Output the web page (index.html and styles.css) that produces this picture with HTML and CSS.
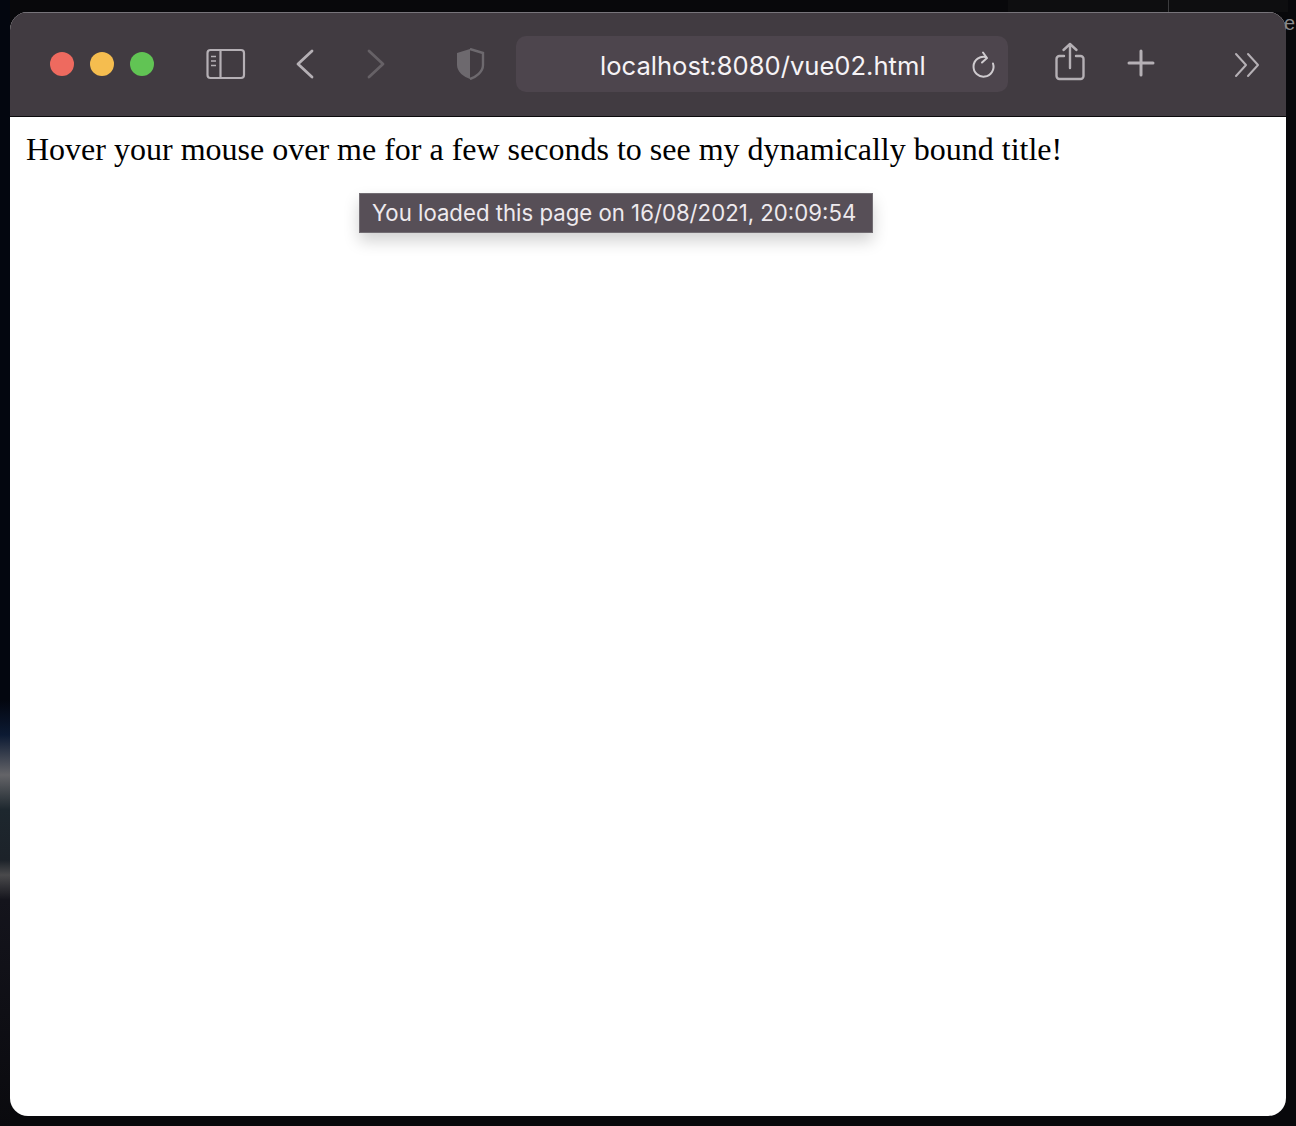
FILE: index.html
```html
<!DOCTYPE html>
<html lang="en">
<head>
<meta charset="utf-8">
<title>vue02</title>
<link rel="stylesheet" href="styles.css">
</head>
<body>
<div class="desktop-lines"><span class="line-a"></span><span class="line-b"></span><span class="edge-letter">e</span></div>
<main class="window">
  <header class="toolbar">
    <div class="lights">
      <span class="light red"></span><span class="light yellow"></span><span class="light green"></span>
    </div>
    <svg class="icon sidebar" width="40" height="32" viewBox="0 0 40 32" fill="none" stroke="#b5b0b5" stroke-width="2.200">
      <rect x="1.500" y="2" width="36.500" height="28" rx="3"/>
      <path d="M14.500 2v28"/>
      <path d="M5 8.500h5M5 13h5M5 17.500h5" stroke-width="1.600"/>
    </svg>
    <svg class="icon back" width="18" height="30" viewBox="0 0 18 30" fill="none" stroke="#b5b0b5" stroke-width="2.800" stroke-linecap="round" stroke-linejoin="round">
      <path d="M16 2 2 15l14 13"/>
    </svg>
    <svg class="icon forward" width="18" height="30" viewBox="0 0 18 30" fill="none" stroke="#666166" stroke-width="2.800" stroke-linecap="round" stroke-linejoin="round">
      <path d="M2 2l14 13L2 28"/>
    </svg>
    <svg class="icon shield" width="30" height="32" viewBox="0 0 30 32">
      <path d="M15 1 2 5v12c0 7 7 12 13 14V1Z" fill="#6d696e"/>
      <path d="M15 1l13 4v12c0 7-7 12-13 14" fill="none" stroke="#6d696e" stroke-width="2.400"/>
    </svg>
    <div class="address">
      <span class="url">localhost:8080/vue02.html</span>
      <svg class="reload" width="24" height="30" viewBox="0 0 24 30" fill="none" stroke="#cfcbcf" stroke-width="2" stroke-linecap="round" stroke-linejoin="round">
        <path d="M14 8A10 10 0 1 0 21 14.500"/>
        <path d="M11 3.500l4 5.500-5 4.500"/>
      </svg>
    </div>
    <svg class="icon share" width="32" height="40" viewBox="0 0 32 40" fill="none" stroke="#b5b0b5" stroke-width="2.400" stroke-linecap="round" stroke-linejoin="round">
      <path d="M10 14H5.500a3 3 0 0 0-3 3v17a3 3 0 0 0 3 3h21a3 3 0 0 0 3-3V17a3 3 0 0 0-3-3H22"/>
      <path d="M16 26V2M9.500 8 16 2l6.500 6"/>
    </svg>
    <svg class="icon plus" width="30" height="30" viewBox="0 0 30 30" stroke="#b5b0b5" stroke-width="3" stroke-linecap="round">
      <path d="M15 3v24M3 15h24"/>
    </svg>
    <svg class="icon more" width="26" height="26" viewBox="0 0 26 26" fill="none" stroke="#b5b0b5" stroke-width="2" stroke-linecap="round" stroke-linejoin="round">
      <path d="M2 2l10 11L2 24M14 2l10 11-10 11"/>
    </svg>
  </header>
  <section class="content">
    <p class="message">Hover your mouse over me for a few seconds to see my dynamically bound title!</p>
    <div class="tooltip">You loaded this page on 16/08/2021, 20:09:54</div>
  </section>
</main>
</body>
</html>
```
FILE: styles.css
```css
html, body { margin: 0; height: 100%; }
body {
  position: relative;
  overflow: hidden;
  box-sizing: border-box;
  padding: 12px 10px 10px;
  background-color: #08080b;
  background-image: linear-gradient(180deg, #03060f 0, #03060f 700px, #0c1a33 735px, #646468 775px, #1d272e 810px, #1c2229 860px, #4a4a4c 875px, #14141c 900px, #0a0a0e 100%);
  background-size: 10px 100%;
  background-repeat: no-repeat;
  font-family: "Liberation Serif", serif;
}
.window {
  height: 1104px;
  border-radius: 18px;
  overflow: hidden;
  background: #fff;
  display: flex;
  flex-direction: column;
}
.toolbar {
  flex: 0 0 105px;
  box-sizing: border-box;
  height: 105px;
  display: flex;
  align-items: center;
  padding: 0 0 2px 40px;
  background: #413b41;
  border-top: 1.500px solid #77747a;
  border-bottom: 1px solid #0c0b0d;
}
.lights { display: flex; gap: 16px; margin-right: 52px; }
.light { width: 24px; height: 24px; border-radius: 50%; }
.red { background: #ee6a5f; }
.yellow { background: #f5bd4f; }
.green { background: #61c454; }
.icon { flex: none; display: block; }
.back { margin-left: 50px; }
.forward { margin-left: 53px; }
.shield { margin-left: 70px; }
.address {
  flex: 0 0 492px;
  height: 56px;
  box-sizing: border-box;
  margin-left: 31px;
  padding: 0 12px 0 84px;
  display: flex;
  align-items: center;
  justify-content: space-between;
  background: #4d454d;
  border-radius: 10px;
}
.url {
  font: 25.600px Inter, "Liberation Sans", Arial, sans-serif;
  color: #f6f3f6;
  margin-top: 4px;
}
.reload { display: block; }
.share { margin-left: 46px; margin-top: -4px; }
.plus { margin-left: 40px; margin-top: -2px; }
.more { margin-left: 78px; margin-top: 2px; }
.content { position: relative; flex: 1; padding: 14px 16px; }
.message {
  margin: 0;
  font-size: 32px;
  line-height: 36px;
  color: #000;
}
.tooltip {
  position: absolute;
  left: 349px;
  top: 76px;
  box-sizing: border-box;
  width: 514px;
  height: 40px;
  padding-left: 12px;
  font: 22.200px/37px Inter, "Liberation Sans", Arial, sans-serif;
  color: #eeeaee;
  background: #574f57;
  border: 1px solid #726d73;
  box-shadow: 0 8px 16px rgba(0, 0, 0, 0.18);
  white-space: nowrap;
}
.desktop-lines { position: absolute; inset: 0; pointer-events: none; }
.line-a { position: absolute; left: 1008px; top: 0; width: 280px; height: 12px; background: #0e0e10; }
.line-b { position: absolute; left: 1168px; top: 0; width: 1px; height: 12px; background: #3c3c3e; }
.edge-letter {
  position: absolute;
  left: 1284px;
  top: 12px;
  font: 20px "Liberation Sans", sans-serif;
  color: #8a8a8c;
}
```
